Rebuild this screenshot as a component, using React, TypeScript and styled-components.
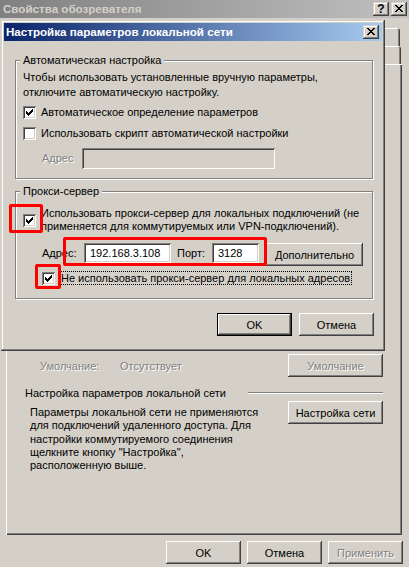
import React from "react";
import styled, { createGlobalStyle, css } from "styled-components";

const FACE = "#d4d0c8";
const FONT = `"Liberation Sans", Arial, sans-serif`;

const GlobalStyle = createGlobalStyle`
  html, body { margin: 0; padding: 0; background: ${FACE}; }
  body { font-family: ${FONT}; font-size: 11px; color: #000; }
  * { box-sizing: border-box; }
`;

const raised = css`
  box-shadow: inset -1px -1px #404040, inset 1px 1px #fff, inset -2px -2px #808080, inset 2px 2px ${FACE};
`;
const sunken = css`
  box-shadow: inset 1px 1px #808080, inset -1px -1px #fff, inset 2px 2px #404040, inset -2px -2px ${FACE};
`;
const embossed = css`
  color: #808080;
  text-shadow: 1px 1px 0 #fff;
`;

const Desktop = styled.div`
  position: relative;
  width: 409px;
  height: 567px;
  overflow: hidden;
  background: ${FACE};
  font-family: ${FONT};
  font-size: 11px;
`;

const Window = styled.div`
  display: flex;
  flex-direction: column;
  width: 100%;
  height: 100%;
`;

const CaptionBar = styled.div<{ $active?: boolean }>`
  flex: none;
  display: flex;
  align-items: center;
  height: 18px;
  padding: ${(p) => (p.$active ? "0 3px 0 2px" : "0 2px 0 3px")};
  background: ${(p) =>
    p.$active
      ? "linear-gradient(90deg, #0a246a, #a6caf0)"
      : "linear-gradient(90deg, #808080, #c0c0c0)"};
  color: ${(p) => (p.$active ? "#fff" : FACE)};
`;

const CaptionTitle = styled.div`
  flex: 1;
  font-weight: bold;
  font-size: 11.6px;
  line-height: 18px;
  white-space: nowrap;
  overflow: hidden;
`;

const CaptionButtons = styled.div`
  display: flex;
  gap: 2px;
`;

const CaptionButton = styled.div`
  width: 16px;
  height: 14px;
  display: flex;
  align-items: center;
  justify-content: center;
  background: ${FACE};
  box-shadow: inset -1px -1px #404040, inset 1px 1px ${FACE}, inset -2px -2px #808080, inset 2px 2px #fff;
  color: #000;
`;

const HelpGlyph = styled.span`
  font-family: ${FONT};
  font-weight: bold;
  font-size: 12px;
  line-height: 12px;
  margin-top: -1px;
`;

const CloseGlyph = () => (
  <svg width="8" height="7" viewBox="0 0 8 7" shapeRendering="crispEdges" style={{ marginTop: -1 }}>
    <path
      fill="#000"
      d="M0 0h2v1H0z M6 0h2v1H6z M1 1h2v1H1z M5 1h2v1H5z M2 2h4v1H2z M3 3h2v1H3z M2 4h4v1H2z M1 5h2v1H1z M5 5h2v1H5z M0 6h2v1H0z M6 6h2v1H6z"
    />
  </svg>
);

const CheckMark = () => (
  <svg width="7" height="7" viewBox="0 0 7 7" shapeRendering="crispEdges">
    <path
      fill="#000"
      d="M0 2h1v3H0z M1 3h1v3H1z M2 4h1v3H2z M3 3h1v3H3z M4 2h1v3H4z M5 1h1v3H5z M6 0h1v3H6z"
    />
  </svg>
);

const WindowBody = styled.div`
  flex: 1;
  display: flex;
  flex-direction: column;
`;

const TabStrip = styled.div`
  flex: none;
  display: flex;
  flex-direction: column;
  padding-top: 10px;
  margin: 0 7px 0 6px;
  height: 46px;
`;

const TabRow = styled.div<{ $inset: number }>`
  display: flex;
  height: 18px;
  padding-right: ${(p) => p.$inset}px;
`;

const Tab = styled.div`
  flex: 1;
  border-radius: 3px 3px 0 0;
  box-shadow: inset 1px 1px #fff, inset -1px 0 #404040, inset -2px 0 #808080;
`;

const TabPage = styled.div`
  flex: none;
  height: 471px;
  margin: 0 7px 0 6px;
  padding: 0 19px 0 19px;
  display: flex;
  flex-direction: column;
  box-shadow: inset 1px 1px #fff, inset -1px -1px #404040, inset -2px -2px #808080;
`;

const HiddenArea = styled.div`
  flex: none;
  height: 290px;
`;

const DefaultRow = styled.div`
  display: flex;
  align-items: center;
  height: 23px;
  padding-left: 15px;
`;

const DisabledText = styled.span<{ $width?: number }>`
  ${embossed};
  white-space: nowrap;
  ${(p) => p.$width && `width: ${p.$width}px;`}
`;

const PushButton = styled.button<{ $w?: number; $default?: boolean; $ml?: number }>`
  flex: none;
  width: ${(p) => p.$w ?? 75}px;
  height: 23px;
  margin: 0 0 0 ${(p) => p.$ml ?? 0}px;
  padding: 0;
  border: none;
  background: ${FACE};
  font-family: ${FONT};
  font-size: 11px;
  color: #000;
  white-space: nowrap;
  ${raised};
  ${(p) =>
    p.$default &&
    css`
      box-shadow: inset 0 0 0 1px #000, inset -2px -2px #404040, inset 2px 2px #fff, inset -3px -3px #808080;
    `}
  &:disabled {
    ${embossed};
  }
`;

const PushRight = styled.div`
  margin-left: auto;
  display: flex;
`;

const SectionHeader = styled.div`
  display: flex;
  align-items: center;
  height: 13px;
  margin-top: 9px;
`;

const SectionTitle = styled.span`
  flex: none;
  width: 223px;
  white-space: nowrap;
`;

const EtchedLine = styled.div`
  flex: 1;
  height: 2px;
  border-top: 1px solid #808080;
  border-bottom: 1px solid #fff;
`;

const SectionBody = styled.div`
  display: flex;
  margin-top: 2px;
`;

const Paragraph = styled.div`
  margin-left: 5px;
  padding-top: 5px;
  line-height: 13.33px;
  white-space: nowrap;
`;

const Footer = styled.div`
  display: flex;
  justify-content: flex-end;
  gap: 6px;
  padding: 6px 6px 0 0;
`;

/* ---------- dialog ---------- */

const Dialog = styled.div`
  position: absolute;
  left: 1px;
  top: 20px;
  width: 384px;
  height: 331px;
  padding: 3px;
  display: flex;
  flex-direction: column;
  background: ${FACE};
  box-shadow: inset -1px -1px #404040, inset 1px 1px ${FACE}, inset -2px -2px #808080, inset 2px 2px #fff;
`;

const DialogClient = styled.div`
  flex: 1;
  display: flex;
  flex-direction: column;
  padding: 19px 8px 12px 11px;
`;

const GroupBox = styled.div<{ $pt: number; $pb: number }>`
  position: relative;
  margin-right: 1px;
  border: 1px solid #808080;
  box-shadow: inset 1px 1px #fff, 1px 1px #fff;
  padding: ${(p) => p.$pt}px 8px ${(p) => p.$pb}px 7px;
  display: flex;
  flex-direction: column;
  & + & {
    margin-top: 12px;
  }
`;

const GroupLegend = styled.span`
  position: absolute;
  top: -7px;
  left: 4px;
  padding: 0 3px;
  line-height: 13px;
  background: ${FACE};
  white-space: nowrap;
`;

const Note = styled.div`
  line-height: 15px;
  white-space: nowrap;
`;

const CheckRow = styled.div<{ $mt: number; $indent?: number }>`
  display: flex;
  align-items: center;
  gap: 5px;
  margin-top: ${(p) => p.$mt}px;
  padding-left: ${(p) => p.$indent ?? 0}px;
`;

const CheckBox = styled.span`
  flex: none;
  width: 13px;
  height: 13px;
  display: flex;
  align-items: center;
  justify-content: center;
  background: #fff;
  ${sunken};
`;

const CheckLabel = styled.span`
  line-height: 13px;
  white-space: nowrap;
`;

const FocusLabel = styled.span`
  margin-left: -1px;
  padding: 0 1px;
  line-height: 12px;
  border: 1px dotted #000;
  white-space: nowrap;
`;

const FieldRow = styled.div<{ $mt: number }>`
  display: flex;
  align-items: flex-start;
  margin-top: ${(p) => p.$mt}px;
  padding-left: 19px;
`;

const FieldLabel = styled.span<{ $w: number; $ml?: number; $disabled?: boolean; $h: number }>`
  flex: none;
  width: ${(p) => p.$w}px;
  margin-left: ${(p) => p.$ml ?? 0}px;
  line-height: ${(p) => p.$h}px;
  white-space: nowrap;
  ${(p) => p.$disabled && embossed};
`;

const TextField = styled.div<{ $w: number; $h: number; $disabled?: boolean }>`
  flex: none;
  width: ${(p) => p.$w}px;
  height: ${(p) => p.$h}px;
  padding: 0 4px 0 6px;
  line-height: ${(p) => p.$h}px;
  background: ${(p) => (p.$disabled ? FACE : "#fff")};
  white-space: nowrap;
  ${sunken};
`;

const DialogButtons = styled.div`
  display: flex;
  justify-content: flex-end;
  gap: 7px;
  margin-top: 14px;
`;

const Highlight = styled.div<{ $x: number; $y: number; $w: number; $h: number }>`
  position: absolute;
  left: ${(p) => p.$x}px;
  top: ${(p) => p.$y}px;
  width: ${(p) => p.$w}px;
  height: ${(p) => p.$h}px;
  border: 3px solid #ff0000;
  border-radius: 2px;
  pointer-events: none;
`;

export default function App() {
  return (
    <>
      <GlobalStyle />
      <Desktop>
        <Window>
          <CaptionBar>
            <CaptionTitle>Свойства обозревателя</CaptionTitle>
            <CaptionButtons>
              <CaptionButton>
                <HelpGlyph>?</HelpGlyph>
              </CaptionButton>
              <CaptionButton>
                <CloseGlyph />
              </CaptionButton>
            </CaptionButtons>
          </CaptionBar>
          <WindowBody>
            <TabStrip>
              <TabRow $inset={2}>
                <Tab />
                <Tab />
                <Tab />
              </TabRow>
              <TabRow $inset={1}>
                <Tab />
                <Tab />
                <Tab />
                <Tab />
              </TabRow>
            </TabStrip>
            <TabPage>
              <HiddenArea />
              <DefaultRow>
                <DisabledText $width={80}>Умолчание:</DisabledText>
                <DisabledText>Отсутствует</DisabledText>
                <PushRight>
                  <PushButton $w={95} disabled>
                    Умолчание
                  </PushButton>
                </PushRight>
              </DefaultRow>
              <SectionHeader>
                <SectionTitle>Настройка параметров локальной сети</SectionTitle>
                <EtchedLine />
              </SectionHeader>
              <SectionBody>
                <Paragraph>
                  Параметры локальной сети не применяются
                  <br />
                  для подключений удаленного доступа. Для
                  <br />
                  настройки коммутируемого соединения
                  <br />
                  щелкните кнопку "Настройка",
                  <br />
                  расположенную выше.
                </Paragraph>
                <PushRight>
                  <PushButton $w={95}>Настройка сети</PushButton>
                </PushRight>
              </SectionBody>
            </TabPage>
            <Footer>
              <PushButton>OK</PushButton>
              <PushButton>Отмена</PushButton>
              <PushButton disabled>Применить</PushButton>
            </Footer>
          </WindowBody>
        </Window>

        <Dialog>
          <CaptionBar $active>
            <CaptionTitle>Настройка параметров локальной сети</CaptionTitle>
            <CaptionButton>
              <CloseGlyph />
            </CaptionButton>
          </CaptionBar>
          <DialogClient>
            <GroupBox $pt={9} $pb={9}>
              <GroupLegend>Автоматическая настройка</GroupLegend>
              <Note>
                Чтобы использовать установленные вручную параметры,
                <br />
                отключите автоматическую настройку.
              </Note>
              <CheckRow $mt={6}>
                <CheckBox>
                  <CheckMark />
                </CheckBox>
                <CheckLabel>Автоматическое определение параметров</CheckLabel>
              </CheckRow>
              <CheckRow $mt={8}>
                <CheckBox />
                <CheckLabel>Использовать скрипт автоматической настройки</CheckLabel>
              </CheckRow>
              <FieldRow $mt={8}>
                <FieldLabel $w={40} $h={21} $disabled>
                  Адрес
                </FieldLabel>
                <TextField $w={193} $h={21} $disabled />
              </FieldRow>
            </GroupBox>

            <GroupBox $pt={15} $pb={13}>
              <GroupLegend>Прокси-сервер</GroupLegend>
              <CheckRow $mt={0}>
                <CheckBox>
                  <CheckMark />
                </CheckBox>
                <CheckLabel>
                  Использовать прокси-сервер для локальных подключений (не
                  <br />
                  применяется для коммутируемых или VPN-подключений).
                </CheckLabel>
              </CheckRow>
              <FieldRow $mt={10}>
                <FieldLabel $w={42} $h={20}>
                  Адрес:
                </FieldLabel>
                <TextField $w={87} $h={20}>
                  192.168.3.108
                </TextField>
                <FieldLabel $w={35} $ml={6} $h={20}>
                  Порт:
                </FieldLabel>
                <TextField $w={47} $h={20}>
                  3128
                </TextField>
                <PushButton $w={97} $ml={7}>
                  Дополнительно
                </PushButton>
              </FieldRow>
              <CheckRow $mt={5} $indent={19}>
                <CheckBox>
                  <CheckMark />
                </CheckBox>
                <FocusLabel>Не использовать прокси-сервер для локальных адресов</FocusLabel>
              </CheckRow>
            </GroupBox>

            <DialogButtons>
              <PushButton $default>OK</PushButton>
              <PushButton>Отмена</PushButton>
            </DialogButtons>
          </DialogClient>
        </Dialog>

        <Highlight $x={9} $y={204} $w={34} $h={29} />
        <Highlight $x={63} $y={237} $w={204} $h={29} />
        <Highlight $x={35} $y={264} $w={26} $h={25} />
      </Desktop>
    </>
  );
}
